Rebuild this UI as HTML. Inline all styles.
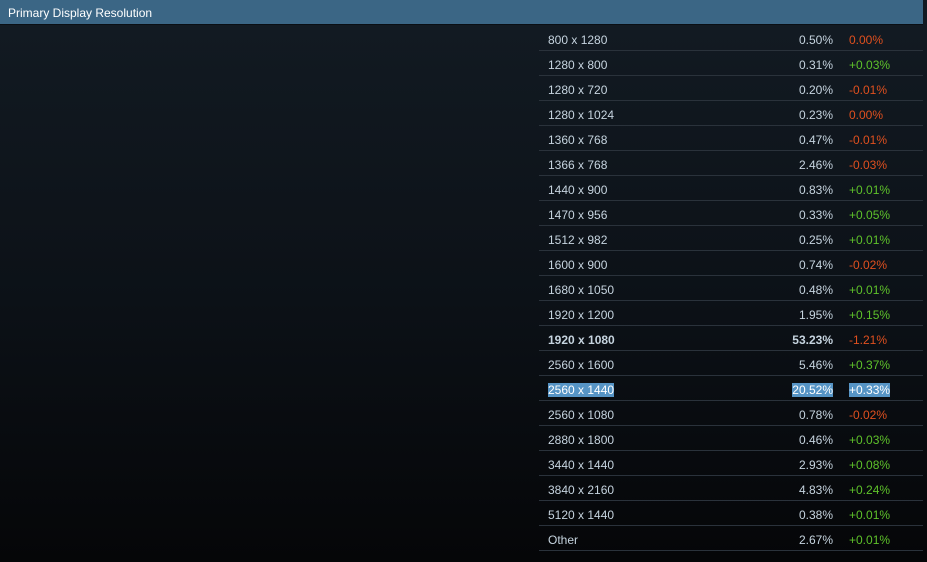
<!DOCTYPE html>
<html><head><style>
*{margin:0;padding:0;box-sizing:border-box}
body{width:927px;height:562px;overflow:hidden;background:linear-gradient(#121a22 25px,#0c1117 300px,#050608 562px);font-family:"Liberation Sans",Arial,sans-serif;font-size:12px;color:#c6d4df;position:relative}
.hd{position:absolute;left:0;top:0;width:923px;height:25px;background:#3b6685;border-bottom:1px solid #0a0f14;color:#fff;font-size:12px;padding:6px 0 0 8px}
.rows{position:absolute;left:539px;top:26px;width:384px}
.r{height:25px;border-bottom:1px solid #2a323b;position:relative}
.r span{position:absolute;top:7px;line-height:14px}
.a{left:9px}.b{right:90px;text-align:right}.c{left:310px}
.g{color:#5ec22a}.d{color:#e0501f}
.bold{font-weight:bold}
.sel{background:#5694c5;color:#fff}
</style></head><body>
<div class="hd">Primary Display Resolution</div>
<div class="rows">
<div class="r"><span class="a">800 x 1280</span><span class="b">0.50%</span><span class="c d">0.00%</span></div>
<div class="r"><span class="a">1280 x 800</span><span class="b">0.31%</span><span class="c g">+0.03%</span></div>
<div class="r"><span class="a">1280 x 720</span><span class="b">0.20%</span><span class="c d">-0.01%</span></div>
<div class="r"><span class="a">1280 x 1024</span><span class="b">0.23%</span><span class="c d">0.00%</span></div>
<div class="r"><span class="a">1360 x 768</span><span class="b">0.47%</span><span class="c d">-0.01%</span></div>
<div class="r"><span class="a">1366 x 768</span><span class="b">2.46%</span><span class="c d">-0.03%</span></div>
<div class="r"><span class="a">1440 x 900</span><span class="b">0.83%</span><span class="c g">+0.01%</span></div>
<div class="r"><span class="a">1470 x 956</span><span class="b">0.33%</span><span class="c g">+0.05%</span></div>
<div class="r"><span class="a">1512 x 982</span><span class="b">0.25%</span><span class="c g">+0.01%</span></div>
<div class="r"><span class="a">1600 x 900</span><span class="b">0.74%</span><span class="c d">-0.02%</span></div>
<div class="r"><span class="a">1680 x 1050</span><span class="b">0.48%</span><span class="c g">+0.01%</span></div>
<div class="r"><span class="a">1920 x 1200</span><span class="b">1.95%</span><span class="c g">+0.15%</span></div>
<div class="r"><span class="a bold">1920 x 1080</span><span class="b bold">53.23%</span><span class="c d">-1.21%</span></div>
<div class="r"><span class="a">2560 x 1600</span><span class="b">5.46%</span><span class="c g">+0.37%</span></div>
<div class="r"><span class="a sel">2560 x 1440</span><span class="b sel">20.52%</span><span class="c sel">+0.33%</span></div>
<div class="r"><span class="a">2560 x 1080</span><span class="b">0.78%</span><span class="c d">-0.02%</span></div>
<div class="r"><span class="a">2880 x 1800</span><span class="b">0.46%</span><span class="c g">+0.03%</span></div>
<div class="r"><span class="a">3440 x 1440</span><span class="b">2.93%</span><span class="c g">+0.08%</span></div>
<div class="r"><span class="a">3840 x 2160</span><span class="b">4.83%</span><span class="c g">+0.24%</span></div>
<div class="r"><span class="a">5120 x 1440</span><span class="b">0.38%</span><span class="c g">+0.01%</span></div>
<div class="r"><span class="a">Other</span><span class="b">2.67%</span><span class="c g">+0.01%</span></div>
</div>
</body></html>
